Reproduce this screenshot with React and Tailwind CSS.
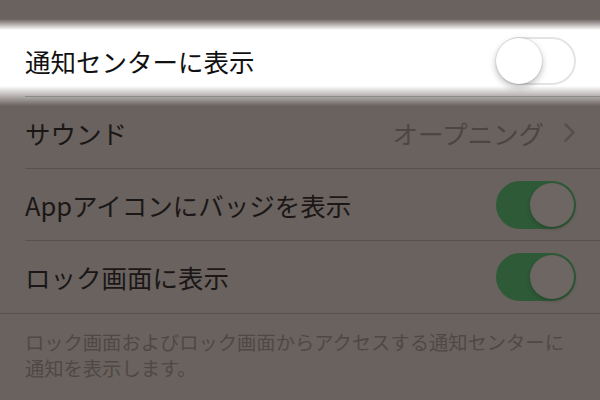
const font = { fontFamily: '"Noto Sans CJK JP", "Noto Sans", sans-serif' };

const Toggle = ({ on, light }) => {
  if (light) {
    return (
      <div className="w-[80px] h-[48px] rounded-full bg-white border-2 border-[#e4e4e4] flex items-center">
        <div className="w-[46px] h-[46px] -ml-[2px] rounded-full bg-white shadow-[0_3px_7px_rgba(0,0,0,0.28),0_0_0_1px_rgba(0,0,0,0.06)]" />
      </div>
    );
  }
  return (
    <div className="w-[80px] h-[48px] rounded-full bg-[#2e5a38] flex items-center justify-end p-[2px]">
      <div
        className={
          on
            ? 'w-[44px] h-[44px] rounded-full bg-[#6e6662] shadow-[0_2px_4px_rgba(0,0,0,0.2)]'
            : 'w-[44px] h-[44px] rounded-full bg-[#6e6662]'
        }
      />
    </div>
  );
};

const Chevron = () => (
  <svg width="11" height="19" viewBox="0 0 11 19" fill="none">
    <polyline
      points="1.5,1.5 9.5,9.5 1.5,17.5"
      stroke="#56504c"
      strokeWidth="2.6"
      strokeLinecap="round"
      strokeLinejoin="round"
    />
  </svg>
);

const Row = ({ label, children, light, last }) => (
  <div className={last ? 'border-b border-[#57504d]' : 'pl-[25px]'}>
    <div
      className={
        'h-[72px] flex items-center justify-between pr-[24px] ' +
        (last ? 'pl-[25px]' : light ? 'border-b border-black/20' : 'border-b border-[#57504d]')
      }
    >
      <span className={light ? 'text-[25.5px] leading-none text-[#111]' : 'text-[25.5px] leading-none text-[#1b1716]'}>
        {label}
      </span>
      {children}
    </div>
  </div>
);

export default function App() {
  return (
    <div
      className="w-[600px] h-[400px] overflow-hidden bg-[linear-gradient(to_bottom,#6a625f_0px,#6a625f_19px,#ffffff_30px,#ffffff_86px,#6a625f_106px,#6a625f_400px)]"
      style={font}
    >
      <div className="h-[25px]" />
      <Row label="通知センターに表示" light>
        <Toggle light />
      </Row>
      <Row label="サウンド">
        <div className="flex items-center gap-[20px] mr-[1px]">
          <span className="text-[25.5px] leading-none text-[#4c4542]">オープニング</span>
          <Chevron />
        </div>
      </Row>
      <Row label="Appアイコンにバッジを表示">
        <Toggle on />
      </Row>
      <Row label="ロック画面に表示" last>
        <Toggle on />
      </Row>
      <div className="pt-[15px] px-[25px] text-[19.3px] leading-[26px] text-[#4f4845] whitespace-nowrap">
        <p>ロック画面およびロック画面からアクセスする通知センターに</p>
        <p>通知を表示します。</p>
      </div>
    </div>
  );
}
